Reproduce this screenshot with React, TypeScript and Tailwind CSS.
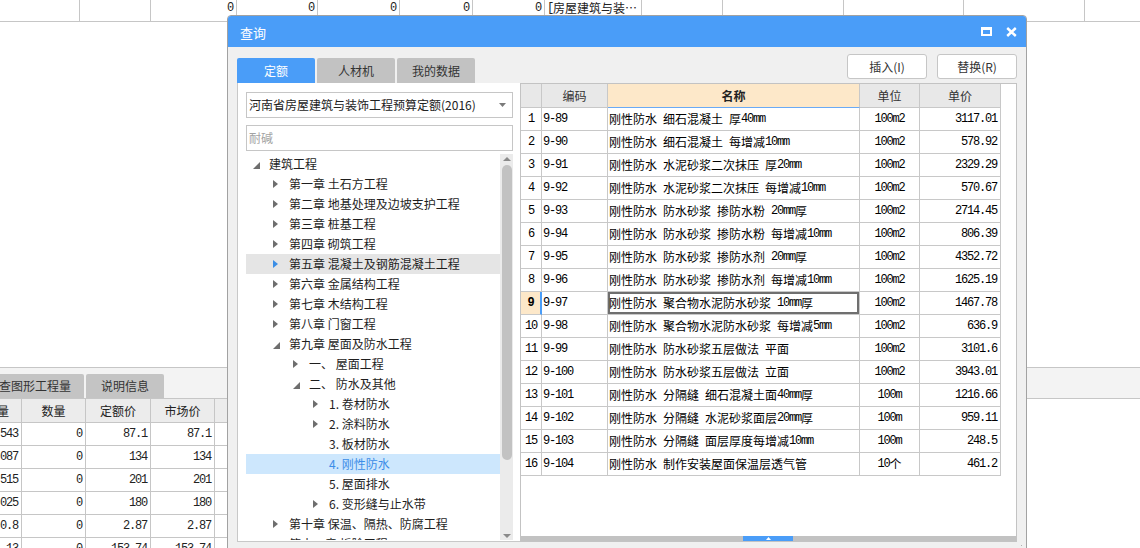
import React from "react";

// fonts
const CJK = "font-['Noto_Sans_CJK_SC',sans-serif]";
const ASCII = "font-['Liberation_Mono',monospace] text-[12px] tracking-[-1.2px]";

// ascii runs look like the half-width bitmap font of the original (6px per char)
const Mixed = ({ text }: { text: string }) => (
    <>
        {text.split(/([\x20-\x7e]+)/).filter(Boolean).map((part, i) =>
            /^[\x20-\x7e]+$/.test(part)
                ? <span key={i} className={ASCII}>{part}</span>
                : <span key={i}>{part}</span>
        )}
    </>
);

const topCells = [
    { w: "w-[80px]", t: "" },
    { w: "w-[71px]", t: "" },
    { w: "w-[86px]", t: "0" },
    { w: "w-[81px]", t: "0" },
    { w: "w-[82px]", t: "0" },
    { w: "w-[73px]", t: "0" },
    { w: "w-[72px]", t: "0" },
    { w: "w-[97px]", t: "[房屋建筑与装…", left: true },
    { w: "w-[81px]", t: "" },
    { w: "w-[121px]", t: "" },
    { w: "w-[120px]", t: "" },
    { w: "w-[121px]", t: "" },
];

const lowerRows = [
    ["543", "0", "87.1", "87.1"],
    ["087", "0", "134", "134"],
    ["515", "0", "201", "201"],
    ["025", "0", "180", "180"],
    ["0.8", "0", "2.87", "2.87"],
    ["13", "0", "153.74", "153.74"],
];

const Background = () => (
    <div className="flex flex-col">
        <div className="flex h-[22px] border-b border-[#c6c6c6]">
            {topCells.map((c, i) => (
                <div
                    key={i}
                    className={`${c.w} shrink-0 h-full border-r border-[#c6c6c6] flex items-start pt-[1px] leading-[14px] text-[12px] overflow-hidden whitespace-pre ${c.left ? "justify-start pl-[2px]" : "justify-end pr-[3px]"}`}
                >
                    <Mixed text={c.t} />
                </div>
            ))}
            <div className="flex-1" />
        </div>

        <div className="h-[345px]" />

        <div className="h-[32px] border-t border-b border-[#c6c6c6] bg-[#f3f3f3] flex items-end">
            <div className="w-[84px] h-[24px] bg-[#c4c4c4] rounded-tr-[2px] flex items-center justify-end pr-[13px] overflow-hidden whitespace-nowrap text-[12px] text-[#333]">
                查图形工程量
            </div>
            <div className="ml-[2px] w-[78px] h-[24px] bg-[#c4c4c4] rounded-t-[2px] flex items-center justify-center text-[12px] text-[#333]">
                说明信息
            </div>
        </div>

        <div className="grid grid-cols-[22px_64px_65px_64px_13px] w-[228px] text-[12px]">
            <div className="h-[24px] bg-[#ececec] border-r border-b border-[#c6c6c6] flex items-center justify-end pr-[12px] overflow-hidden whitespace-nowrap">工程量</div>
            <div className="h-[24px] bg-[#ececec] border-r border-b border-[#c6c6c6] flex items-center justify-center">数量</div>
            <div className="h-[24px] bg-[#ececec] border-r border-b border-[#c6c6c6] flex items-center justify-center">定额价</div>
            <div className="h-[24px] bg-[#ececec] border-r border-b border-[#c6c6c6] flex items-center justify-center">市场价</div>
            <div className="h-[24px] bg-[#ececec] border-r border-b border-[#c6c6c6]" />
            {lowerRows.map((r, i) => (
                <React.Fragment key={i}>
                    {r.map((v, j) => (
                        <div key={j} className="h-[23px] border-r border-b border-[#c6c6c6] flex items-center justify-end pr-[3px] overflow-hidden whitespace-nowrap">
                            <span className={ASCII}>{v}</span>
                        </div>
                    ))}
                    <div className="h-[23px] border-r border-b border-[#c6c6c6]" />
                </React.Fragment>
            ))}
        </div>
    </div>
);

// tree
type TreeNode = { l: 0 | 1 | 2 | 3; t: string; a?: "right" | "down"; s?: "hover" | "sel" };

const tree: TreeNode[] = [
    { l: 0, t: "建筑工程", a: "down" },
    { l: 1, t: "第一章 土石方工程", a: "right" },
    { l: 1, t: "第二章 地基处理及边坡支护工程", a: "right" },
    { l: 1, t: "第三章 桩基工程", a: "right" },
    { l: 1, t: "第四章 砌筑工程", a: "right" },
    { l: 1, t: "第五章 混凝土及钢筋混凝土工程", a: "right", s: "hover" },
    { l: 1, t: "第六章 金属结构工程", a: "right" },
    { l: 1, t: "第七章 木结构工程", a: "right" },
    { l: 1, t: "第八章 门窗工程", a: "right" },
    { l: 1, t: "第九章 屋面及防水工程", a: "down" },
    { l: 2, t: "一、 屋面工程", a: "right" },
    { l: 2, t: "二、 防水及其他", a: "down" },
    { l: 3, t: "1. 卷材防水", a: "right" },
    { l: 3, t: "2. 涂料防水", a: "right" },
    { l: 3, t: "3. 板材防水" },
    { l: 3, t: "4. 刚性防水", s: "sel" },
    { l: 3, t: "5. 屋面排水" },
    { l: 3, t: "6. 变形缝与止水带", a: "right" },
    { l: 1, t: "第十章 保温、隔热、防腐工程", a: "right" },
    { l: 1, t: "第十一章 拆除工程", a: "right" },
];

const indent = ["pl-[7px]", "pl-[27px]", "pl-[47px]", "pl-[67px]"];

const Tri = ({ dir, color }: { dir: "right" | "down"; color: string }) =>
    dir === "right" ? (
        <svg width="5" height="8" viewBox="0 0 5 8"><path d="M0 0L5 4L0 8Z" fill={color} /></svg>
    ) : (
        <svg width="7" height="7" viewBox="0 0 7 7" className="mt-[3px]"><path d="M7 0V7H0Z" fill={color} /></svg>
    );

const Tree = () => (
    <div className="flex h-[386px] mt-[3px] overflow-hidden">
        <div className="w-[254px] flex flex-col">
            {tree.map((n, i) => (
                <div
                    key={i}
                    className={`h-[20px] shrink-0 flex items-center ${indent[n.l]} ${n.s === "hover" ? "bg-[#e5e5e5]" : ""} ${n.s === "sel" ? "bg-[#cde7fd] text-[#3b8de8]" : "text-[#1e1e1e]"}`}
                >
                    <div className="w-[16px] h-full flex items-center">
                        {n.a && <Tri dir={n.a} color={n.s === "hover" ? "#3b8ee6" : "#6e6e6e"} />}
                    </div>
                    <span className="text-[12px] leading-none whitespace-nowrap">{n.t}</span>
                </div>
            ))}
        </div>
        <div className="w-[13px] bg-[#ebebeb] flex flex-col items-center">
            <svg width="8" height="4" viewBox="0 0 8 4" className="mt-[3px]"><path d="M0 4L4 0L8 4Z" fill="#8a8a8a" /></svg>
            <div className="mt-[4px] w-[10px] h-[295px] rounded-[5px] bg-[#c2c2c2]" />
            <div className="flex-1" />
            <svg width="8" height="4" viewBox="0 0 8 4" className="mb-[2px]"><path d="M0 0L8 0L4 4Z" fill="#8a8a8a" /></svg>
        </div>
    </div>
);

// table
const rows: [string, string, string, string][] = [
    ["9-89", "刚性防水 细石混凝土 厚40mm", "100m2", "3117.01"],
    ["9-90", "刚性防水 细石混凝土 每增减10mm", "100m2", "578.92"],
    ["9-91", "刚性防水 水泥砂浆二次抹压 厚20mm", "100m2", "2329.29"],
    ["9-92", "刚性防水 水泥砂浆二次抹压 每增减10mm", "100m2", "570.67"],
    ["9-93", "刚性防水 防水砂浆 掺防水粉 20mm厚", "100m2", "2714.45"],
    ["9-94", "刚性防水 防水砂浆 掺防水粉 每增减10mm", "100m2", "806.39"],
    ["9-95", "刚性防水 防水砂浆 掺防水剂 20mm厚", "100m2", "4352.72"],
    ["9-96", "刚性防水 防水砂浆 掺防水剂 每增减10mm", "100m2", "1625.19"],
    ["9-97", "刚性防水 聚合物水泥防水砂浆 10mm厚", "100m2", "1467.78"],
    ["9-98", "刚性防水 聚合物水泥防水砂浆 每增减5mm", "100m2", "636.9"],
    ["9-99", "刚性防水 防水砂浆五层做法 平面", "100m2", "3101.6"],
    ["9-100", "刚性防水 防水砂浆五层做法 立面", "100m2", "3943.01"],
    ["9-101", "刚性防水 分隔缝 细石混凝土面40mm厚", "100m", "1216.66"],
    ["9-102", "刚性防水 分隔缝 水泥砂浆面层20mm厚", "100m", "959.11"],
    ["9-103", "刚性防水 分隔缝 面层厚度每增减10mm", "100m", "248.5"],
    ["9-104", "刚性防水 制作安装屋面保温层透气管", "10个", "461.2"],
];

const cell = "h-[23px] border-r border-b border-[#c8c8c8] flex items-center overflow-hidden whitespace-pre text-[12px] text-black";
const head = "h-[24px] border-r border-b border-[#c8c8c8] bg-[#e8e8e8] flex items-center justify-center text-[12px] text-[#333]";

const ResultTable = () => (
    <div className="grid grid-cols-[21px_66px_252px_60px_81px] w-[480px]">
        <div className={head} />
        <div className={head}>编码</div>
        <div className="h-[24px] border-r border-b border-r-[#c8c8c8] border-b-[#6aaaf5] bg-[#fde8c9] flex items-center justify-center text-[12px] font-bold text-[#222]">名称</div>
        <div className={head}>单位</div>
        <div className={head}>单价</div>
        {rows.map((r, i) => {
            const sel = i === 8;
            return (
                <React.Fragment key={i}>
                    <div className={`${cell} justify-center ${sel ? "bg-[#fde8c9] border-r-2 border-r-[#4a9df8]" : ""}`}>
                        <span className={`${ASCII} ${sel ? "font-bold" : ""}`}>{i + 1}</span>
                    </div>
                    <div className={`${cell} pl-[1px]`}><span className={ASCII}>{r[0]}</span></div>
                    <div className={`${cell} pl-[1px] ${sel ? "ring-2 ring-inset ring-[#6f6f6f]" : ""}`}><Mixed text={r[1]} /></div>
                    <div className={`${cell} justify-center`}><Mixed text={r[2]} /></div>
                    <div className={`${cell} justify-end pr-[3px]`}><span className={ASCII}>{r[3]}</span></div>
                </React.Fragment>
            );
        })}
    </div>
);

const QueryDialog = () => (
    <div className="absolute left-[227px] top-[15px] w-[800px] h-[560px] flex flex-col border border-[#a2a2a2] rounded-t-[4px] bg-[#f0f0f0] overflow-hidden">
        <div className="h-[31px] shrink-0 bg-[#4a9df8] flex items-center pl-[12px] pr-[9px]">
            <span className="text-white text-[13px] pt-[2px]">查询</span>
            <div className="ml-auto flex items-center gap-[14px]">
                <div className="w-[11px] h-[9px] border-2 border-t-[3px] border-white" />
                <svg width="11" height="10" viewBox="0 0 11 10">
                    <path d="M1.2 1L9.8 9M9.8 1L1.2 9" stroke="#fff" strokeWidth="2.4" />
                </svg>
            </div>
        </div>

        <div className="h-[36px] shrink-0 flex justify-between px-[9px]">
            <div className="flex items-end gap-[2px]">
                <div className="w-[78px] h-[25px] rounded-t-[2px] bg-[#4a9df8] text-white text-[12px] flex items-center justify-center">定额</div>
                <div className="w-[78px] h-[25px] rounded-t-[2px] bg-[#c2c2c2] text-[#333] text-[12px] flex items-center justify-center">人材机</div>
                <div className="w-[78px] h-[25px] rounded-t-[2px] bg-[#c2c2c2] text-[#333] text-[12px] flex items-center justify-center">我的数据</div>
            </div>
            <div className="flex gap-[10px] pt-[7px]">
                <button className="w-[80px] h-[25px] bg-white border border-[#c6c6c6] rounded-[3px] text-[12px] text-[#333]">插入(I)</button>
                <button className="w-[80px] h-[25px] bg-white border border-[#c6c6c6] rounded-[3px] text-[12px] text-[#333]">替换(R)</button>
            </div>
        </div>

        <div className="h-[459px] shrink-0 flex px-[9px]">
            <div className="w-[283px] h-full bg-white border-l border-b border-[#c8c8c8] pl-[8px] pt-[9px] flex flex-col">
                <div className="w-[267px] h-[26px] border border-[#c6c6c6] flex items-center pl-[2px] pr-[6px] text-[12px] text-[#222]">
                    <span className="whitespace-nowrap">河南省房屋建筑与装饰工程预算定额(2016)</span>
                    <svg width="7" height="4" viewBox="0 0 7 4" className="ml-auto"><path d="M0 0H7L3.5 4Z" fill="#7a7a7a" /></svg>
                </div>
                <div className="mt-[7px] w-[267px] h-[26px] border border-[#c6c6c6] flex items-center pl-[2px] text-[12px] text-[#a3a3a3]">
                    耐碱
                </div>
                <Tree />
            </div>
            <div className="w-[497px] h-full bg-white border border-[#c3c3c3] flex flex-col">
                <ResultTable />
                <div className="mt-auto h-[5px] bg-[#c2c2c2] flex">
                    <div className="ml-[222px] w-[50px] h-full bg-[#4a9df8] flex items-center justify-center">
                        <svg width="5" height="3" viewBox="0 0 5 3"><path d="M0 3L2.5 0L5 3Z" fill="#fff" /></svg>
                    </div>
                </div>
            </div>
        </div>

        <div className="flex justify-end pr-[3px] pt-[3px]">
            <svg width="5" height="4" viewBox="0 0 5 4">
                <rect x="3" y="0" width="1" height="1" fill="#b0b0b0" />
                <rect x="0" y="3" width="1" height="1" fill="#b0b0b0" />
                <rect x="3" y="3" width="1" height="1" fill="#b0b0b0" />
            </svg>
        </div>
    </div>
);

export default function App() {
    return (
        <div className={`relative w-[1140px] h-[548px] overflow-hidden bg-white text-[#222] ${CJK}`}>
            <Background />
            <QueryDialog />
        </div>
    );
}
